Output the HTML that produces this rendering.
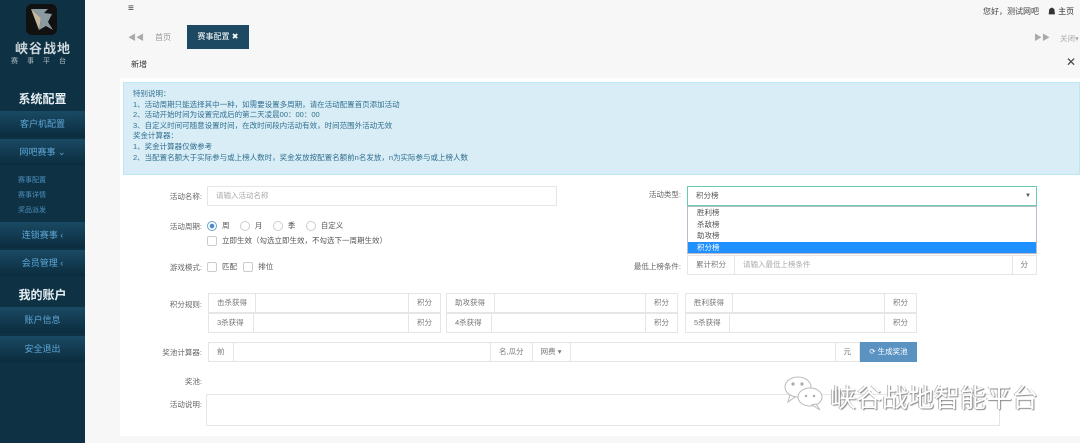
<!DOCTYPE html>
<html><head><meta charset="utf-8"><style>
*{box-sizing:border-box;margin:0;padding:0}
body{width:1080px;height:443px;overflow:hidden;background:#f7f7f7;font-family:"Liberation Sans","Noto Sans CJK SC",sans-serif;font-size:8px;color:#555;position:relative}
.a{position:absolute}
.sb{left:0;top:0;width:85px;height:443px;background:#0e3244}
.item{position:absolute;left:0;width:85px;height:26px;background:linear-gradient(#1a4a64,#0b2c3e);color:#5fa7d6;font-size:9px;text-align:center;line-height:26px}
.sub{position:absolute;left:18px;color:#4d90bf;font-size:7px}
.hd{position:absolute;left:0;width:85px;text-align:center;color:#e6eef3;font-size:12px;font-weight:bold}
.panel{left:120px;top:78px;width:960px;height:358px;background:#fff}
.lbl{position:absolute;font-size:7.5px;color:#666;text-align:right;width:80px}
.inp{position:absolute;border:1px solid #e6e6e6;background:#fff;height:20px;font-size:7.5px;color:#aaa;line-height:18px;padding-left:8px}
.grp{position:absolute;display:flex;height:20px;border:1px solid #e6e6e6;font-size:7.5px;color:#777;line-height:18px}
.grp span{padding:0 8px;border-right:1px solid #e6e6e6;white-space:nowrap}
.grp span.f{flex:1}
.grp span:last-child{border-right:none}
.rad{display:inline-block;width:10px;height:10px;border:1px solid #ccc;border-radius:50%;vertical-align:middle;margin-right:5px}
.chk{display:inline-block;width:10px;height:10px;border:1px solid #ccc;border-radius:2px;vertical-align:middle;margin-right:5px}
</style></head><body>
<div class="a sb">
 <div class="a" style="left:26px;top:4px;width:31px;height:31px;border-radius:6px;background:#111;overflow:hidden">
  <svg width="31" height="31"><polygon points="5,5 15,14 13,26 20,22 27,26 22,18 26,10 18,9 22,5" fill="#8a9aa0"/><polygon points="5,5 15,14 13,26" fill="#c8b8a0"/></svg>
 </div>
 <div class="a" style="left:7px;top:38px;width:72px;text-align:center;color:#cfd8dc;font-size:13px;font-weight:bold;letter-spacing:1px">峡谷战地</div>
 <div class="a" style="left:7px;top:56px;width:72px;text-align:center;color:#b0bcc2;font-size:7px;letter-spacing:9px">赛事平台</div>
 <div class="hd" style="top:90px">系统配置</div>
 <div class="item" style="top:111px">客户机配置</div>
 <div class="item" style="top:139px">网吧赛事 ⌄</div>
 <div class="sub" style="top:175px">赛事配置</div>
 <div class="sub" style="top:190px">赛事详情</div>
 <div class="sub" style="top:205px">奖品派发</div>
 <div class="item" style="top:222px">连锁赛事 ‹</div>
 <div class="item" style="top:250px">会员管理 ‹</div>
 <div class="hd" style="top:286px">我的账户</div>
 <div class="item" style="top:307px">账户信息</div>
 <div class="item" style="top:336px">安全退出</div>
</div>
<div class="a" style="left:128px;top:3px;font-size:10px;color:#333">≡</div>
<div class="a" style="left:983px;top:6px;font-size:8px;color:#444">您好，测试网吧 &nbsp;&nbsp; <span style="color:#333">☗ 主页</span></div>
<div class="a" style="left:128px;top:32px;font-size:8px;color:#aaa">◀◀</div>
<div class="a" style="left:155px;top:32px;font-size:8px;color:#999">首页</div>
<div class="a" style="left:187px;top:25px;width:62px;height:24px;background:#1d4a62;color:#fff;font-size:8px;line-height:24px;text-align:center">赛事配置 ✖</div>
<div class="a" style="left:1034px;top:32px;font-size:8px;color:#aaa">▶▶</div>
<div class="a" style="left:1060px;top:33px;font-size:7.5px;color:#aaa">关闭▾</div>
<div class="a" style="left:131px;top:59px;font-size:8px;color:#333">新增</div>
<div class="a" style="left:1066px;top:55px;font-size:12px;color:#444">✕</div>
<div class="a panel"></div>
<div class="a" style="left:123px;top:82px;width:957px;height:93px;background:#d9edf7;border:1px solid #bce8f1;color:#31708f;font-size:7.5px;line-height:10.6px;padding:6px 0 0 9px">特别说明：<br>1、活动周期只能选择其中一种，如需要设置多周期，请在活动配置首页添加活动<br>2、活动开始时间为设置完成后的第二天凌晨00：00：00<br>3、自定义时间可随意设置时间，在改时间段内活动有效，时间范围外活动无效<br>奖金计算器：<br>1、奖金计算器仅做参考<br>2、当配置名额大于实际参与或上榜人数时，奖金发放按配置名额前n名发放，n为实际参与或上榜人数</div>

<div class="lbl" style="left:122px;top:191px">活动名称:</div>
<div class="inp" style="left:207px;top:186px;width:350px">请输入活动名称</div>
<div class="lbl" style="left:601px;top:189px">活动类型:</div>
<div class="inp" style="left:687px;top:186px;width:350px;border-color:#66cdb5;color:#555">积分榜<span style="position:absolute;right:5px;font-size:6px">▼</span></div>
<div class="a" style="left:687px;top:206px;width:350px;height:48px;background:#fff;border:1px solid #bbc;font-size:7.5px;color:#555;line-height:11.5px">
 <div style="padding-left:9px">胜利榜</div><div style="padding-left:9px">杀敌榜</div><div style="padding-left:9px">助攻榜</div><div style="padding-left:9px;background:#1e90ff;color:#fff">积分榜</div>
</div>

<div class="lbl" style="left:122px;top:221px">活动周期:</div>
<div class="a" style="left:207px;top:220px;font-size:7.5px;color:#555"><span class="rad" style="border-color:#6aa0d0;background:radial-gradient(#4a88c8 35%,#fff 45%)"></span>周 &nbsp;&nbsp;&nbsp;&nbsp;<span class="rad"></span>月 &nbsp;&nbsp;&nbsp;&nbsp;<span class="rad"></span>季 &nbsp;&nbsp;&nbsp;&nbsp;<span class="rad"></span>自定义</div>
<div class="a" style="left:207px;top:235px;font-size:7.5px;color:#555"><span class="chk"></span>立即生效（勾选立即生效，不勾选下一周期生效）</div>

<div class="lbl" style="left:122px;top:262px">游戏模式:</div>
<div class="a" style="left:207px;top:261px;font-size:7.5px;color:#555"><span class="chk"></span>匹配 &nbsp;&nbsp;<span class="chk"></span>排位</div>
<div class="lbl" style="left:601px;top:261px">最低上榜条件:</div>
<div class="grp" style="left:687px;top:255px;width:350px"><span>累计积分</span><span class="f" style="color:#aaa">请输入最低上榜条件</span><span>分</span></div>

<div class="lbl" style="left:122px;top:299px">积分规则:</div>
<div class="grp" style="left:208px;top:293px;width:233px"><span style="width:47px">击杀获得</span><span class="f"></span><span>积分</span></div>
<div class="grp" style="left:208px;top:313px;width:233px"><span style="width:45px">3杀获得</span><span class="f"></span><span>积分</span></div>
<div class="grp" style="left:446px;top:293px;width:232px"><span style="width:48px">助攻获得</span><span class="f"></span><span>积分</span></div>
<div class="grp" style="left:446px;top:313px;width:232px"><span style="width:45px">4杀获得</span><span class="f"></span><span>积分</span></div>
<div class="grp" style="left:685px;top:293px;width:232px"><span style="width:47px">胜利获得</span><span class="f"></span><span>积分</span></div>
<div class="grp" style="left:685px;top:313px;width:232px"><span style="width:44px">5杀获得</span><span class="f"></span><span>积分</span></div>

<div class="lbl" style="left:122px;top:347px">奖池计算器:</div>
<div class="grp" style="left:208px;top:342px;width:652px"><span>前</span><span class="f"></span><span>名,瓜分</span><span>网费 ▾</span><span style="width:265px"></span><span>元</span></div>
<div class="a" style="left:860px;top:342px;width:57px;height:20px;background:#5a92c2;color:#fff;font-size:7.5px;line-height:20px;text-align:center">⟳ 生成奖池</div>

<div class="lbl" style="left:122px;top:376px">奖池:</div>
<div class="lbl" style="left:122px;top:399px">活动说明:</div>
<div class="a" style="left:206px;top:394px;width:794px;height:32px;border:1px solid #e6e6e6;background:#fff"></div>

<svg class="a" style="left:782px;top:373px" width="44" height="40"><g fill="#fff" stroke="#bbb" stroke-width="1"><ellipse cx="16" cy="14" rx="13" ry="10"/><path d="M8 22 L6 29 L13 24Z"/><ellipse cx="28" cy="24" rx="12" ry="9"/><path d="M34 31 L38 37 L30 32Z"/></g><g fill="#aaa"><circle cx="11" cy="11" r="1.6"/><circle cx="20" cy="11" r="1.6"/><circle cx="24" cy="23" r="1.2"/><circle cx="32" cy="23" r="1.2"/></g></svg>
<div class="a" style="left:830px;top:378px;font-size:26px;color:#fff;letter-spacing:0;text-shadow:1px 1px 1px #888,-1px 0 0 #bbb">峡谷战地智能平台</div>
</body></html>
